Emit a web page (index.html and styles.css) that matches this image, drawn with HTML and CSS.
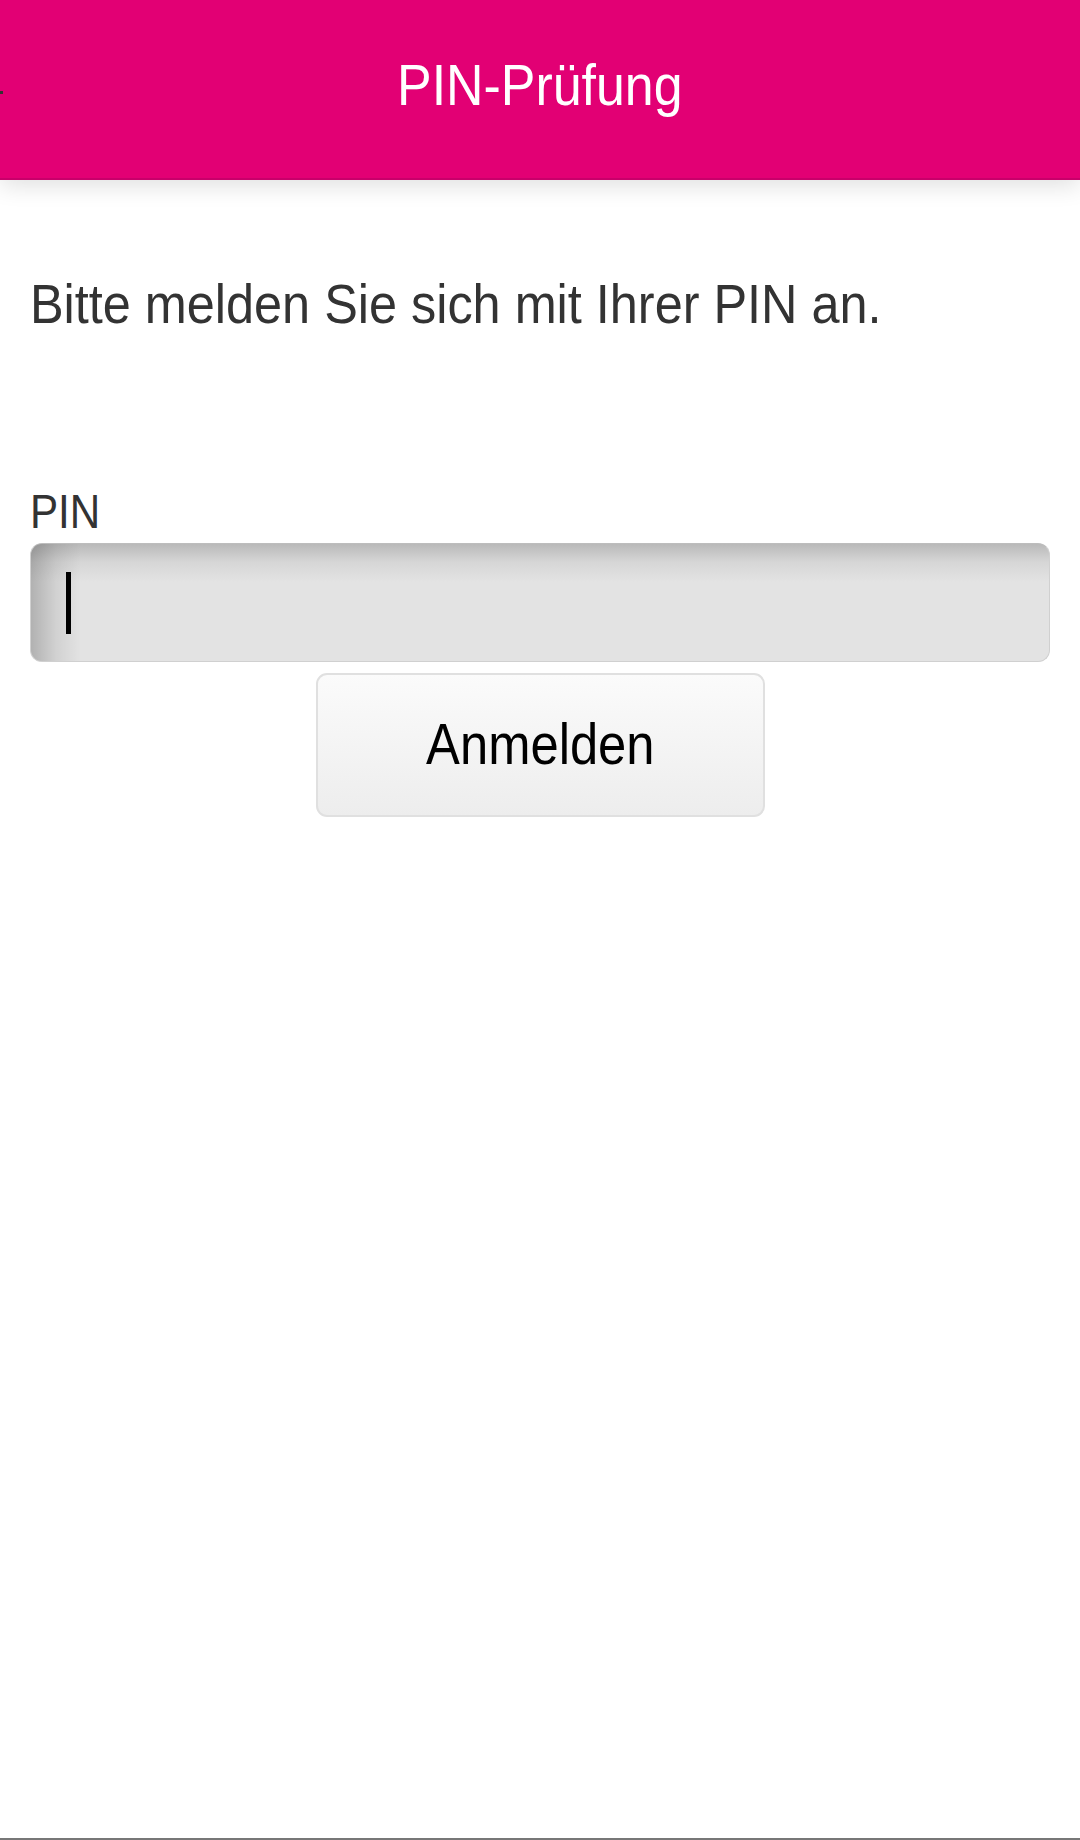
FILE: index.html
```html
<!DOCTYPE html>
<html lang="de">
<head>
    <meta charset="UTF-8">
    <meta name="viewport" content="width=device-width, initial-scale=1.0">
    <title>PIN-Prüfung</title>
    <link rel="stylesheet" href="styles.css">
</head>
<body>
    <div id="header">
        <span class="back-mark"></span>
        <h1><span class="narrow">PIN-Prüfung</span></h1>
    </div>
    <div id="content">
        <p class="intro"><span class="narrow">Bitte melden Sie sich mit Ihrer PIN an.</span></p>
        <form id="pin-form">
            <label for="pin-input"><span class="narrow">PIN</span></label>
            <div class="pin-field">
                <span class="caret"></span>
            </div>
            <div class="submit-row">
                <a href="javascript:void(0)" id="submit-btn"><span class="narrow">Anmelden</span></a>
            </div>
        </form>
    </div>
    <div id="bottom-line"></div>
</body>
</html>
```

FILE: styles.css
```css
html, body {
    margin: 0;
    padding: 0;
    height: 100%;
}
body {
    background-color: white;
    color: #333;
    font-family: "Liberation Sans", Arial, sans-serif;
    display: flex;
    flex-direction: column;
    width: 1080px;
    height: 1840px;
    overflow: hidden;
}
/* the app font is a condensed grotesk, squeeze the sans to match */
.narrow {
    display: inline-block;
    white-space: nowrap;
    transform: scaleX(0.9);
    transform-origin: left center;
}
#header {
    position: relative;
    height: 180px;
    padding-bottom: 8px;
    box-sizing: border-box;
    background-color: #e20074;
    border-bottom: 2px solid #c8006a;
    box-shadow: 0 6px 22px rgba(0, 0, 0, 0.12);
    display: flex;
    align-items: center;
    justify-content: center;
    flex-shrink: 0;
    z-index: 2;
}
#header h1 {
    margin: 0;
    color: white;
    font-weight: normal;
    font-size: 57px;
    line-height: 64px;
}
#header .narrow {
    transform: scaleX(0.91);
    transform-origin: center;
}
.back-mark {
    position: absolute;
    left: 0;
    top: 91px;
    width: 3px;
    height: 3px;
    background-color: #333;
}
#content {
    flex: 1;
    padding: 0 30px;
}
.intro {
    margin: 92px 0 0 0;
    font-size: 56px;
    line-height: 64px;
}
#pin-form {
    margin-top: 147px;
}
#pin-form label {
    display: block;
    font-size: 49px;
    line-height: 56px;
}
#pin-form label .narrow {
    transform: scaleX(0.86);
}
.pin-field {
    margin-top: 4px;
    height: 119px;
    box-sizing: border-box;
    background-color: #e3e3e3;
    background-image: linear-gradient(to right, rgba(0, 0, 0, 0.22), rgba(0, 0, 0, 0.08) 25px, rgba(0, 0, 0, 0) 50px),
        linear-gradient(#b9b9b9, #d6d6d6 18px, #e3e3e3 38px);
    border: 1px solid #d0d0d0;
    border-top-color: #bdbdbd;
    border-radius: 12px;
    display: flex;
    align-items: center;
    padding-left: 35px;
}
.caret {
    display: block;
    width: 5px;
    height: 62px;
    background-color: black;
}
.submit-row {
    margin-top: 11px;
    display: flex;
    justify-content: center;
}
#submit-btn {
    width: 449px;
    height: 144px;
    box-sizing: border-box;
    display: flex;
    align-items: center;
    justify-content: center;
    background: linear-gradient(#fbfbfb, #ededed);
    border: 2px solid #e0e0e0;
    border-radius: 11px;
    color: black;
    text-decoration: none;
    font-size: 57px;
    padding-bottom: 2px;
}
#submit-btn .narrow {
    transform: scaleX(0.89);
    transform-origin: center;
}
#bottom-line {
    height: 2px;
    background-color: #777;
    flex-shrink: 0;
}
```
